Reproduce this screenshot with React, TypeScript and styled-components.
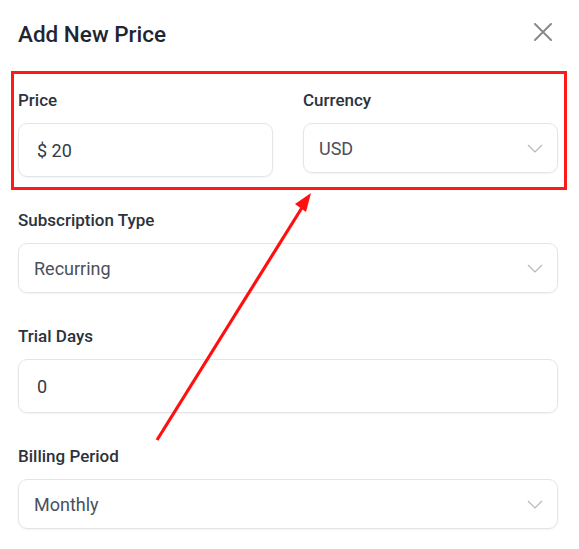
import React from "react";
import styled, { createGlobalStyle } from "styled-components";

const GlobalStyle = createGlobalStyle`
  html, body {
    margin: 0;
    padding: 0;
    background: #ffffff;
  }
  body {
    font-family: Roboto, "Noto Sans", "Liberation Sans", sans-serif;
  }
`;

export default function App() {
  return (
    <Page>
      <GlobalStyle />
      <Header>
        <Title>Add New Price</Title>
        <CloseButton aria-label="Close">
          <svg width="18" height="18" viewBox="0 0 18 18">
            <path d="M1 1 L17 17 M17 1 L1 17" stroke="#8a8a8a" strokeWidth="2" strokeLinecap="round" />
          </svg>
        </CloseButton>
      </Header>

      <Form>
        <Row>
          <Field>
            <Label>Price</Label>
            <TextBox>$ 20</TextBox>
          </Field>
          <Field>
            <Label>Currency</Label>
            <Select value="USD" />
          </Field>
        </Row>

        <Field>
          <Label>Subscription Type</Label>
          <Select value="Recurring" />
        </Field>

        <Field>
          <Label>Trial Days</Label>
          <TextBox>0</TextBox>
        </Field>

        <Field>
          <Label>Billing Period</Label>
          <Select value="Monthly" />
        </Field>
      </Form>

      <Highlight />
      <Pointer width="579" height="549" viewBox="0 0 579 549">
        <line x1="157" y1="440" x2="303" y2="206" stroke="#ff1010" strokeWidth="3.2" />
        <polygon points="311,193 295,204 306,212" fill="#ff1010" />
      </Pointer>
    </Page>
  );
}

function Select({ value }: { value: string }) {
  return (
    <SelectBox>
      <SelectValue>{value}</SelectValue>
      <svg width="16" height="9" viewBox="0 0 16 9">
        <path d="M1 1 L8 8 L15 1" fill="none" stroke="#b4b8be" strokeWidth="1.2" />
      </svg>
    </SelectBox>
  );
}

const Page = styled.div`
  position: relative;
  width: 579px;
  height: 549px;
  padding: 20px 21px 0 18px;
  box-sizing: border-box;
  overflow: hidden;
`;

const Header = styled.div`
  display: flex;
  align-items: center;
  justify-content: space-between;
  height: 28px;
  margin-bottom: 42px;
`;

const Title = styled.h2`
  margin: 0;
  font-size: 22.5px;
  line-height: 28px;
  font-weight: 500;
  color: #1f2633;
`;

const CloseButton = styled.button`
  display: flex;
  border: 0;
  padding: 0;
  background: none;
  margin-right: 6px;
  margin-top: -5px;
`;

const Form = styled.div`
  display: flex;
  flex-direction: column;
  gap: 33px;
`;

const Row = styled.div`
  display: grid;
  grid-template-columns: 1fr 1fr;
  column-gap: 30px;
  align-items: start;
`;

const Field = styled.div`
  display: flex;
  flex-direction: column;
  gap: 13px;
`;

const Label = styled.div`
  font-size: 17px;
  line-height: 20px;
  font-weight: 500;
  color: #2d323c;
`;

const TextBox = styled.div`
  height: 54px;
  box-sizing: border-box;
  display: flex;
  align-items: center;
  padding: 0 18px;
  border: 1px solid #e3e5e8;
  border-radius: 9px;
  box-shadow: 0 1px 2px rgba(0, 0, 0, 0.05);
  font-size: 18px;
  color: #343a46;
`;

const SelectBox = styled.div`
  height: 50px;
  box-sizing: border-box;
  display: flex;
  align-items: center;
  justify-content: space-between;
  padding: 0 14px 0 15px;
  border: 1px solid #e3e5e8;
  border-radius: 9px;
  box-shadow: 0 1px 2px rgba(0, 0, 0, 0.05);
`;

const SelectValue = styled.span`
  font-size: 18px;
  font-weight: 400;
  color: #4a505c;
`;

const Highlight = styled.div`
  position: absolute;
  left: 11px;
  top: 71px;
  width: 556px;
  height: 119px;
  box-sizing: border-box;
  border: 3px solid #ff1a1a;
  pointer-events: none;
`;

const Pointer = styled.svg`
  position: absolute;
  left: 0;
  top: 0;
  pointer-events: none;
`;
